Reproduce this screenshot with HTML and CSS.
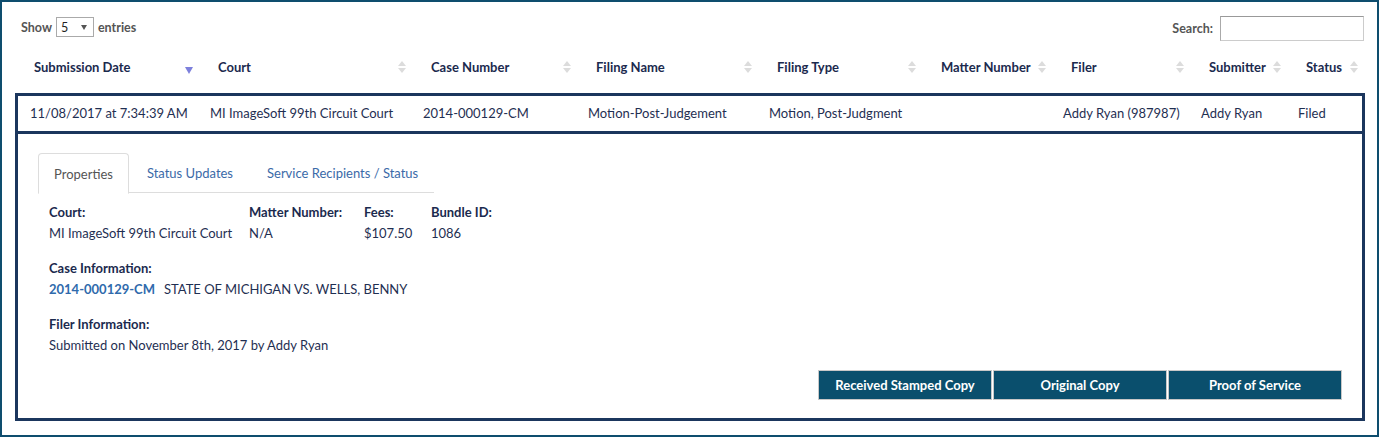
FILE: index.html
```html
<!DOCTYPE html>
<html>
<head>
<meta charset="utf-8">
<link rel="stylesheet" href="styles.css">
</head>
<body>
<div class="page">
  <div class="toolbar">
    <label class="length">Show
      <span class="select"><span class="sel-val">5</span><span class="sel-caret"></span></span>
      entries</label>
    <label class="search">Search: <span class="search-input"></span></label>
  </div>

  <div class="tbl">
    <div class="thead">
      <div class="th"><span>Submission Date</span><span class="sort-active"></span></div>
      <div class="th"><span>Court</span><span class="sort"></span></div>
      <div class="th"><span>Case Number</span><span class="sort"></span></div>
      <div class="th"><span>Filing Name</span><span class="sort"></span></div>
      <div class="th"><span>Filing Type</span><span class="sort"></span></div>
      <div class="th"><span>Matter Number</span><span class="sort"></span></div>
      <div class="th"><span>Filer</span><span class="sort"></span></div>
      <div class="th"><span>Submitter</span><span class="sort"></span></div>
      <div class="th"><span>Status</span><span class="sort"></span></div>
    </div>
    <div class="row">
      <div class="td first">11/08/2017 at 7:34:39 AM</div>
      <div class="td">MI ImageSoft 99th Circuit Court</div>
      <div class="td">2014-000129-CM</div>
      <div class="td">Motion-Post-Judgement</div>
      <div class="td">Motion, Post-Judgment</div>
      <div class="td"></div>
      <div class="td">Addy Ryan (987987)</div>
      <div class="td">Addy Ryan</div>
      <div class="td">Filed</div>
    </div>
    <div class="detail">
      <div class="tabs">
        <div class="tab active">Properties</div>
        <div class="tab">Status Updates</div>
        <div class="tab">Service Recipients / Status</div>
      </div>
      <div class="props">
        <div class="prop-grid">
          <div class="lbl">Court:</div>
          <div class="lbl">Matter Number:</div>
          <div class="lbl">Fees:</div>
          <div class="lbl">Bundle ID:</div>
          <div class="val">MI ImageSoft 99th Circuit Court</div>
          <div class="val">N/A</div>
          <div class="val">$107.50</div>
          <div class="val">1086</div>
        </div>
        <div class="section">
          <div class="lbl">Case Information:</div>
          <div class="val"><a class="case-link">2014-000129-CM</a>STATE OF MICHIGAN VS. WELLS, BENNY</div>
        </div>
        <div class="section">
          <div class="lbl">Filer Information:</div>
          <div class="val">Submitted on November 8th, 2017 by Addy Ryan</div>
        </div>
      </div>
      <div class="buttons">
        <button class="btn">Received Stamped Copy</button>
        <button class="btn">Original Copy</button>
        <button class="btn">Proof of Service</button>
      </div>
    </div>
  </div>
</div>
</body>
</html>
```
FILE: styles.css
```css
* { box-sizing: border-box; }
html, body { margin: 0; padding: 0; background: #fff; }
body {
  font-family: Lato, "Open Sans", "Liberation Sans", sans-serif;
  font-size: 13px;
  color: #1f2f52;
}
.page {
  width: 1379px;
  height: 437px;
  border: 2px solid #0e4d6e;
  padding: 14px 13px 0 13px;
}
.toolbar {
  display: flex;
  justify-content: space-between;
  align-items: flex-start;
  height: 25px;
}
.length {
  display: flex;
  align-items: center;
  gap: 4px;
  margin-left: 6px;
  margin-top: 1px;
  color: #555;
  font-weight: 700;
  font-size: 12.5px;
}
.select {
  display: inline-flex;
  align-items: center;
  justify-content: space-between;
  width: 38px;
  height: 20px;
  border: 1px solid #aaa;
  padding: 0 6px 0 4px;
  color: #222;
  font-weight: 400;
}
.sel-caret {
  width: 0; height: 0;
  border-left: 3px solid transparent;
  border-right: 3px solid transparent;
  border-top: 5px solid #555;
}
.search {
  display: flex;
  align-items: center;
  gap: 7px;
  color: #555;
  font-weight: 700;
  font-size: 12.5px;
}
.search-input {
  display: block;
  width: 144px;
  height: 25px;
  border: 1px solid #ccc;
  border-top-color: #999;
  border-left-color: #aaa;
}
.tbl { width: 1350px; }
.thead {
  display: grid;
  grid-template-columns: 185px 213px 165px 181px 164px 130px 138px 97px 77px;
  height: 52px;
}
.th {
  display: flex;
  align-items: center;
  justify-content: space-between;
  padding: 0 7px 0 19px;
  font-weight: 700;
  color: #1b2a4e;
  white-space: nowrap;
}
.th:not(:first-child) { padding-left: 18px; }
.sort {
  display: flex;
  flex-direction: column;
  gap: 2px;
}
.sort::before, .sort::after {
  content: "";
  width: 0; height: 0;
  border-left: 4px solid transparent;
  border-right: 4px solid transparent;
}
.sort::before { border-bottom: 5px solid #dcdcdc; }
.sort::after { border-top: 5px solid #dcdcdc; }
.sort-active {
  width: 0; height: 0;
  margin-top: 7px;
  border-left: 4.5px solid transparent;
  border-right: 4.5px solid transparent;
  border-top: 7px solid #7d80dc;
}
.row {
  display: grid;
  grid-template-columns: 182px 213px 165px 181px 164px 130px 138px 97px 74px;
  height: 41px;
  border: 3px solid #1b365d;
  align-items: center;
  padding-bottom: 1px;
}
.td { padding-left: 10px; white-space: nowrap; color: #1f2f52; }
.td.first { padding-left: 12px; }
.detail {
  border: 3px solid #1b365d;
  border-top: 0;
  height: 287px;
  padding: 19px 20px 0 20px;
  display: flex;
  flex-direction: column;
}
.tabs {
  display: flex;
  width: 396px;
  height: 40px;
  border-bottom: 1px solid #ddd;
}
.tab {
  display: flex;
  align-items: center;
  flex-shrink: 0;
  white-space: nowrap;
  padding: 0 15px;
  margin-right: 2px;
  color: #3b6aa8;
  border: 1px solid transparent;
  border-radius: 4px 4px 0 0;
}
.tab.active {
  color: #555;
  border-color: #ddd;
  border-bottom-color: #fff;
  height: 41px;
  background: #fff;
}
.props { padding: 9px 0 0 11px; line-height: 21px; }
.prop-grid {
  display: grid;
  grid-template-columns: 200px 115px 67px auto;
}
.lbl { font-weight: 700; color: #1b2a4e; }
.val { color: #1f2f52; }
.section { margin-top: 14px; }
.case-link {
  color: #2f6aac;
  font-weight: 700;
  margin-right: 9px;
}
.buttons {
  display: flex;
  justify-content: flex-end;
  gap: 1px;
  margin-top: 14px;
}
.btn {
  width: 174px;
  height: 30px;
  background: #0a4f6d;
  color: #fff;
  border: 1px solid #c8c8c8;
  font-family: Lato, "Open Sans", "Liberation Sans", sans-serif;
  font-size: 13px;
  font-weight: 700;
  padding: 0;
}
```
